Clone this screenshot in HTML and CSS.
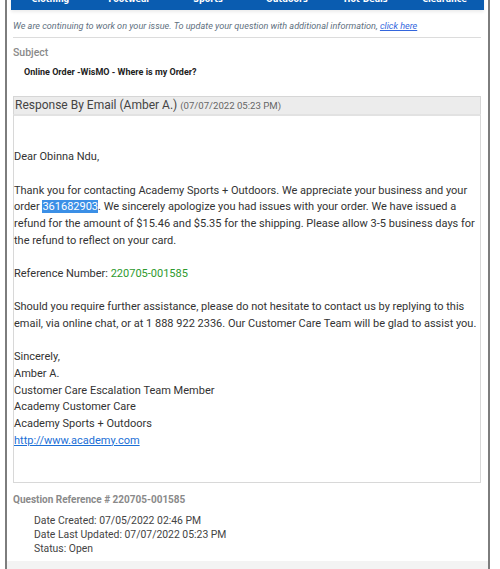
FILE: index.html
```html
<!DOCTYPE html>
<html>
<head>
<meta charset="utf-8">
<link rel="stylesheet" href="styles.css">
</head>
<body>
<div class="frame">
  <nav class="nav">
    <span>Clothing</span><span>Footwear</span><span>Sports</span><span>Outdoors</span><span>Hot Deals</span><span>Clearance</span>
  </nav>
  <div class="content">
    <p class="notice">We are continuing to work on your issue. To update your question with additional information, <a href="#">click here</a></p>
    <h3 class="label">Subject</h3>
    <p class="subject">Online Order -WisMO - Where is my Order?</p>
    <section class="response">
      <header class="resp-head">Response By Email (Amber A.) <span class="resp-date">(07/07/2022 05:23 PM)</span></header>
      <div class="resp-body">
        <p class="gap2"></p>
        <p>Dear Obinna Ndu,</p>
        <p>Thank you for contacting Academy Sports + Outdoors. We appreciate your business and your order <span class="sel">361682903</span>. We sincerely apologize you had issues with your order. We have issued a refund for the amount of $15.46 and $5.35 for the shipping. Please allow 3-5 business days for the refund to reflect on your card.</p>
        <p>Reference Number: <span class="ref">220705-001585</span></p>
        <p>Should you require further assistance, please do not hesitate to contact us by replying to this email, via online chat, or at 1 888 922 2336. Our Customer Care Team will be glad to assist you.</p>
        <p class="sig">Sincerely,<br>Amber A.<br>Customer Care Escalation Team Member<br>Academy Customer Care<br>Academy Sports + Outdoors<br><a href="#">http://www.academy.com</a></p>
      </div>
    </section>
    <h4 class="qref">Question Reference # 220705-001585</h4>
    <ul class="meta">
      <li>Date Created: 07/05/2022 02:46 PM</li>
      <li>Date Last Updated: 07/07/2022 05:23 PM</li>
      <li>Status: Open</li>
    </ul>
  </div>
  <div class="footer-band"></div>
</div>
</body>
</html>
```
FILE: styles.css
```css
html, body {
  margin: 0;
  padding: 0;
  background: #ffffff;
  overflow: hidden;
}
body {
  font-family: Roboto, "Liberation Sans", sans-serif;
  color: #3c3c3c;
}
.frame {
  margin-left: 5px;
  width: 481px;
  border-left: 2px solid #7d7d7d;
  border-right: 2px solid #7d7d7d;
  height: 569px;
  overflow: hidden;
}
.nav {
  margin: -12px 4px 0 4px;
  height: 22px;
  background: #0a5cb0;
  display: grid;
  grid-template-columns: repeat(6, 1fr);
  align-items: center;
  box-shadow: 0 2px 3px rgba(0, 0, 0, 0.08);
}
.nav span {
  text-align: center;
  color: #ffffff;
  font-family: "DejaVu Sans", sans-serif;
  font-weight: bold;
  font-size: 8px;
  line-height: 22px;
  padding-top: 1px;
}
.content {
  padding: 0 7px 0 6px;
}
.notice {
  margin: 11px 0 0 0;
  padding-bottom: 5px;
  border-bottom: 1px solid #dcdcdc;
  font-size: 9.1px;
  font-style: italic;
  color: #607080;
  line-height: 11px;
}
.notice a {
  color: #3366dd;
}
.label {
  margin: 8px 0 0 0;
  font-size: 10.5px;
  font-weight: 500;
  color: #8a8a8a;
  line-height: 13px;
}
.subject {
  margin: 8px 0 0 11px;
  font-size: 9px;
  font-weight: bold;
  color: #222;
  line-height: 11px;
}
.response {
  margin-top: 18px;
}
.resp-head {
  background: #ececec;
  border: 1px solid #d6d6d6;
  border-bottom: 0;
  padding: 1px 0 1px 1px;
  font-size: 12px;
  line-height: 15px;
  color: #444;
}
.resp-date {
  font-size: 9.6px;
  color: #666;
}
.resp-body {
  border: 1px solid #d8d8d8;
  border-top: 2px solid #e2e2e2;
  padding: 0 0 33px 0;
  font-size: 11px;
  line-height: 16.67px;
  color: #333;
}
.resp-body p {
  margin: 0 0 16.67px 0;
}
.resp-body p.gap2 {
  height: 16.67px;
}
.resp-body p.sig {
  margin-bottom: 0;
}
.sel {
  background: #3b8fe6;
  color: #ffffff;
}
.ref {
  color: #2e9a2e;
}
.resp-body a {
  color: #1b6fd6;
}
.qref {
  margin: 11px 0 0 0;
  font-size: 10px;
  font-weight: bold;
  color: #8a8a8a;
  line-height: 12px;
}
.meta {
  list-style: none;
  margin: 8px 0 0 0;
  padding: 0 0 0 21px;
  font-size: 10.4px;
  line-height: 14px;
  color: #444;
}
.footer-band {
  margin-top: 5px;
  height: 20px;
  background: #f3f3f3;
}
```
